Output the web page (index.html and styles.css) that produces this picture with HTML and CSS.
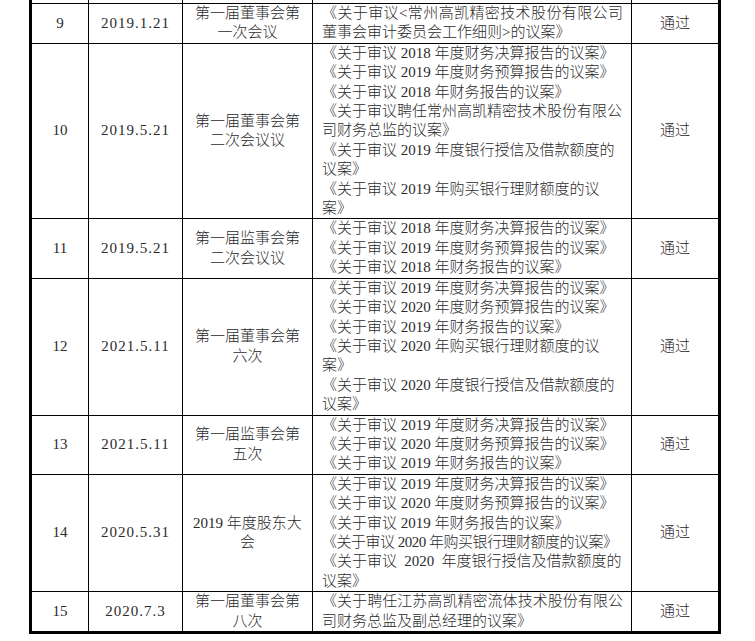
FILE: index.html
```html
<!DOCTYPE html>
<html lang="zh-CN">
<head>
<meta charset="utf-8">
<title>会议记录</title>
<link rel="stylesheet" href="styles.css">
</head>
<body>
<table class="grid">
  <colgroup>
    <col class="w-no">
    <col class="w-date">
    <col class="w-meet">
    <col class="w-items">
    <col class="w-res">
  </colgroup>
  <tbody>
    <tr class="stub"><td></td><td></td><td></td><td></td><td></td></tr>
    <tr>
      <td>9</td>
      <td class="date">2019.1.21</td>
      <td class="meet">第一届董事会第一次会议</td>
      <td class="items">
        <div class="just">《关于审议&lt;常州高凯精密技术股份有限公司董事会审计委员会工作细则&gt;的议案》</div>
      </td>
      <td>通过</td>
    </tr>
    <tr>
      <td>10</td>
      <td class="date">2019.5.21</td>
      <td class="meet">第一届董事会第二次会议议</td>
      <td class="items">
        <div>《关于审议 2018 年度财务决算报告的议案》</div>
        <div>《关于审议 2019 年度财务预算报告的议案》</div>
        <div>《关于审议 2018 年财务报告的议案》</div>
        <div>《关于审议聘任常州高凯精密技术股份有限公司财务总监的议案》</div>
        <div>《关于审议 2019 年度银行授信及借款额度的议案》</div>
        <div>《关于审议 2019 年购买银行理财额度的议案》</div>
      </td>
      <td>通过</td>
    </tr>
    <tr>
      <td>11</td>
      <td class="date">2019.5.21</td>
      <td class="meet">第一届监事会第二次会议议</td>
      <td class="items">
        <div>《关于审议 2018 年度财务决算报告的议案》</div>
        <div>《关于审议 2019 年度财务预算报告的议案》</div>
        <div>《关于审议 2018 年财务报告的议案》</div>
      </td>
      <td>通过</td>
    </tr>
    <tr>
      <td>12</td>
      <td class="date">2021.5.11</td>
      <td class="meet">第一届董事会第六次</td>
      <td class="items">
        <div>《关于审议 2019 年度财务决算报告的议案》</div>
        <div>《关于审议 2020 年度财务预算报告的议案》</div>
        <div>《关于审议 2019 年财务报告的议案》</div>
        <div>《关于审议 2020 年购买银行理财额度的议案》</div>
        <div>《关于审议 2020 年度银行授信及借款额度的议案》</div>
      </td>
      <td>通过</td>
    </tr>
    <tr>
      <td>13</td>
      <td class="date">2021.5.11</td>
      <td class="meet">第一届监事会第五次</td>
      <td class="items">
        <div>《关于审议 2019 年度财务决算报告的议案》</div>
        <div>《关于审议 2020 年度财务预算报告的议案》</div>
        <div>《关于审议 2019 年财务报告的议案》</div>
      </td>
      <td>通过</td>
    </tr>
    <tr>
      <td>14</td>
      <td class="date">2020.5.31</td>
      <td class="meet">2019 年度股东大会</td>
      <td class="items">
        <div>《关于审议 2019 年度财务决算报告的议案》</div>
        <div>《关于审议 2020 年度财务预算报告的议案》</div>
        <div>《关于审议 2019 年财务报告的议案》</div>
        <div class="tight">《关于审议 2020 年购买银行理财额度的议案》</div>
        <div class="spread">《关于审议 2020 年度银行授信及借款额度的议案》</div>
      </td>
      <td>通过</td>
    </tr>
    <tr>
      <td>15</td>
      <td class="date">2020.7.3</td>
      <td class="meet">第一届董事会第八次</td>
      <td class="items">
        <div class="just">《关于聘任江苏高凯精密流体技术股份有限公司财务总监及副总经理的议案》</div>
      </td>
      <td>通过</td>
    </tr>
  </tbody>
</table>
</body>
</html>
```

FILE: styles.css
```css
html, body {
  margin: 0;
  padding: 0;
  background: #ffffff;
}

.grid {
  margin-left: 29px;
  width: 692px;
  box-sizing: border-box;
  table-layout: fixed;
  border-collapse: separate;
  border-spacing: 0;
  border-left: 3px solid #000;
  border-right: 3px solid #000;
  border-bottom: 3px solid #000;
  font-family: "Liberation Serif", "Noto Sans CJK SC", serif;
  font-size: 15px;
  font-weight: 300;
  line-height: 19.4px;
  color: #2a2a2a;
  text-spacing-trim: space-all;
}

.w-no { width: 57px; }
.w-date { width: 94px; }
.w-meet { width: 130px; }
.w-items { width: 319px; }
.w-res { width: 86px; }

.grid td {
  box-sizing: border-box;
  padding: 0;
  border-right: 1px solid #000;
  border-bottom: 1px solid #000;
  text-align: center;
  vertical-align: middle;
}

.grid td:last-child {
  border-right: none;
}

.grid tr:last-child td {
  border-bottom: none;
}

.stub td {
  height: 4px;
}

.date {
  letter-spacing: 1px;
}

.grid td.meet {
  padding: 0 8px;
}

.grid td.items {
  text-align: left;
  padding: 0 8px 0 9px;
}

.just {
  text-align: justify;
}

.tight {
  letter-spacing: -0.5px;
}

.spread {
  word-spacing: 3.5px;
}
```
